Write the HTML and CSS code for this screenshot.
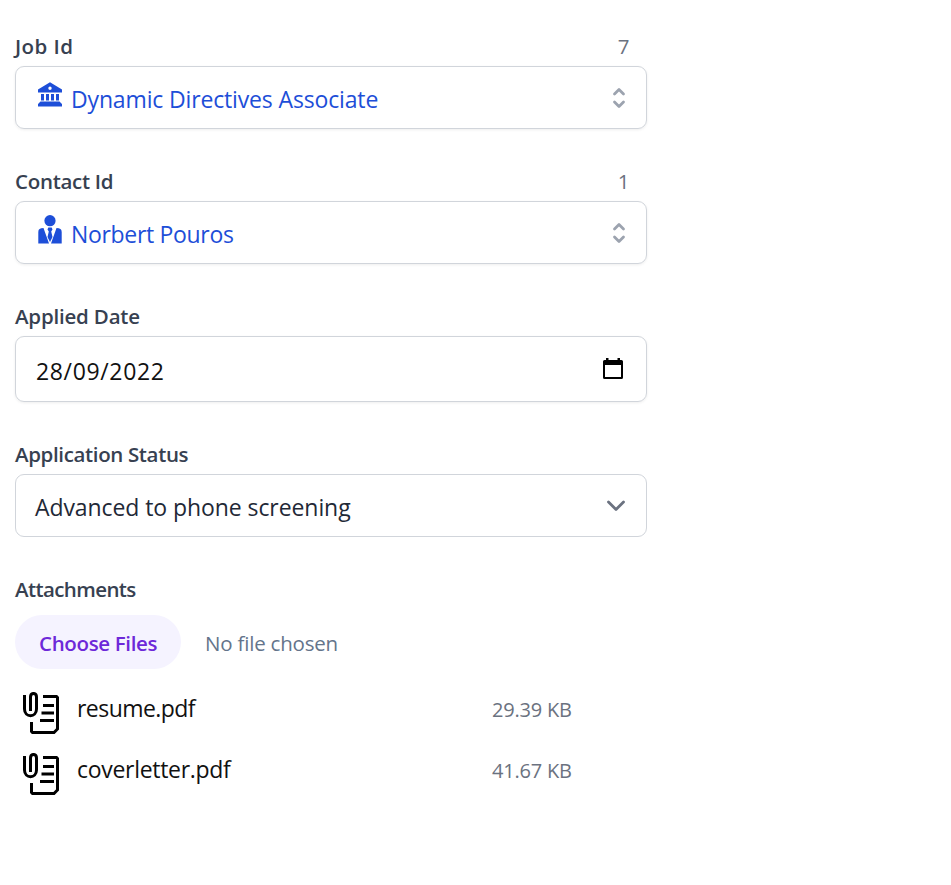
FILE: index.html
```html
<!DOCTYPE html>
<html lang="en">
<head>
<meta charset="utf-8">
<title>Job Application</title>
<link rel="stylesheet" href="styles.css">
</head>
<body>
<svg width="0" height="0" class="defs">
  <symbol id="selector" viewBox="0 0 16 24"><path d="M3.500 8 8 3.500 12.500 8M3.500 16 8 20.500 12.500 16" fill="none" stroke="#9ca3af" stroke-width="2.800" stroke-linecap="round" stroke-linejoin="round"/></symbol>
  <symbol id="attachment" viewBox="0 0 37 42"><path d="M1.500 3V17C1.500 26 13.500 26 13.500 17V5C13.500 .3 7.500 .3 7.500 5V19M20 4.500H33.500L34.500 5.500V37L31 40.500H9.500L8.500 39.500V30M20 13.500H31M18.500 21H31M17 28.500H31" fill="none" stroke="#000" stroke-width="3"/></symbol>
</svg>
<form class="form">
  <div class="field">
    <div class="heading"><label class="t-job">Job Id</label><span class="count">7</span></div>
    <div class="control lookup">
      <svg class="icon" viewBox="0 0 26 30"><path fill-rule="evenodd" d="M13 2.300 25 9.500V12.500H1V9.500ZM13 6.500a1.700 1.700 0 1 0 0 3.400 1.700 1.700 0 0 0 0-3.400Z"/><path d="M4 14h3v6.500H4zM9 14h3v6.500H9zM14 14h3v6.500h-3zM19 14h3v6.500h-3zM3.500 21.500h19l2.500 2.500V26.500H1V24z"/></svg>
      <span class="t-associate">Dynamic Directives Associate</span>
      <svg class="selector"><use href="#selector"/></svg>
    </div>
  </div>
  <div class="field">
    <div class="heading"><label class="t-contact">Contact Id</label><span class="count">1</span></div>
    <div class="control lookup">
      <svg class="icon" viewBox="0 0 26 30"><circle cx="13" cy="5.700" r="5.600"/><path d="M6.500 13 12 28.500H1.300V17C1.300 14 3 13 6.500 13ZM19.500 13C23 13 24.700 14 24.700 17V28.500H14L19.500 13Z"/><path d="M11.300 12.500h3.400l.8 2-1.300 2L15.500 22 13 27 10.500 22l1.300-5.500-1.300-2z"/></svg>
      <span class="t-person">Norbert Pouros</span>
      <svg class="selector"><use href="#selector"/></svg>
    </div>
  </div>
  <div class="field">
    <div class="heading"><label class="t-date">Applied Date</label></div>
    <div class="control date">
      <span class="t-day">28/09/2022</span>
      <svg class="calendar" viewBox="0 0 20 22"><path fill-rule="evenodd" d="M3 0h2.500v2h9V0H17v2h1.500Q20 2 20 3.500v16q0 1.500-1.500 1.500h-17Q0 21 0 19.500v-16Q0 2 1.500 2H3ZM2 7v12h16V7Z"/></svg>
    </div>
  </div>
  <div class="field">
    <div class="heading"><label class="t-status">Application Status</label></div>
    <div class="control status">
      <span class="t-phase">Advanced to phone screening</span>
      <svg class="chevron" viewBox="0 0 20 14"><path d="m2.500 3 7.500 7.500L17.500 3" fill="none" stroke="#6b7280" stroke-width="2.800" stroke-linecap="round" stroke-linejoin="round"/></svg>
    </div>
  </div>
  <div class="attachments">
    <div class="heading"><label class="t-attach">Attachments</label></div>
    <div class="picker"><button type="button"><span class="t-choose">Choose Files</span></button><span class="t-none">No file chosen</span></div>
    <ul class="files">
      <li><svg class="paper"><use href="#attachment"/></svg><span class="name"><span class="t-resume">resume.pdf</span></span><span class="size">29.39 KB</span></li>
      <li><svg class="paper"><use href="#attachment"/></svg><span class="name"><span class="t-cover">coverletter.pdf</span></span><span class="size">41.67 KB</span></li>
    </ul>
  </div>
</form>
</body>
</html>
```
FILE: styles.css
```css
* { box-sizing: border-box; }
body { margin: 0; background: #fff; font-family: "Open Sans", "Noto Sans", sans-serif; font-size: 23px; color: #111; }
.defs { display: block; }
.form { width: 632px; margin-left: 15px; padding-top: 31px; white-space: nowrap; }
.field { margin-bottom: 37px; }
.heading { display: flex; justify-content: space-between; height: 30px; margin-bottom: 5px; padding-right: 17.500px; font-size: 20.500px; line-height: 30px; color: #374151; }
.heading label { font-weight: 600; }
.heading .count { color: #6b7280; }
.control { display: flex; align-items: center; height: 63px; border: 1px solid #d1d5db; border-radius: 9px; box-shadow: 0 1px 3px rgba(0, 0, 0, .07); line-height: 36px; }
.lookup { padding: 0 19px 0 21px; color: #1d4ed8; }
.lookup span { padding-top: 3px; }
.icon { width: 26px; height: 30px; margin: 0 8px 6px 0; fill: #1d4ed8; flex: none; }
.selector { width: 16px; height: 24px; margin-left: auto; }
.date { height: 66px; padding: 0 23px 0 20px; color: #111; }
.date span { padding-top: 4px; }
.calendar { width: 20px; height: 22px; margin-left: auto; }
.status { padding: 0 20px 0 19px; color: #1f2937; box-shadow: none; }
.status span { padding-top: 3px; }
.chevron { width: 20px; height: 14px; margin-left: auto; }
.attachments .heading { margin-bottom: 11px; }
.picker { display: flex; align-items: center; height: 54px; font-size: 20.500px; color: #64748b; }
.picker button { width: 166px; height: 54px; margin-right: 24px; padding: 2px 0 0 24px; border: 0; border-radius: 27px; background: #f5f3ff; color: #6d28d9; font: 600 20.500px "Open Sans", sans-serif; text-align: left; }
.files { margin: 13px 0 0; padding: 0 0 0 8px; list-style: none; }
.files li { display: flex; align-items: center; height: 61px; }
.paper { width: 37px; height: 42px; margin-right: 17px; }
.name { width: 415px; padding-bottom: 10px; }
.size { font-size: 20px; color: #6b7280; padding-bottom: 6px; letter-spacing: -.2px; }

.t-job { letter-spacing: .45px; }
.t-contact { letter-spacing: -.3px; }
.t-date { letter-spacing: -.2px; }
.t-status { letter-spacing: -.36px; }
.t-attach { letter-spacing: -.6px; }
.t-choose { letter-spacing: -.35px; }
.t-none { padding-top: 2px; letter-spacing: -.2px; }
.t-associate { letter-spacing: -.15px; }
.t-person { letter-spacing: -.32px; }
.t-day { letter-spacing: .65px; }
.t-phase { letter-spacing: -.08px; }
.t-resume { letter-spacing: -.55px; }
.t-cover { letter-spacing: -.3px; }
```
